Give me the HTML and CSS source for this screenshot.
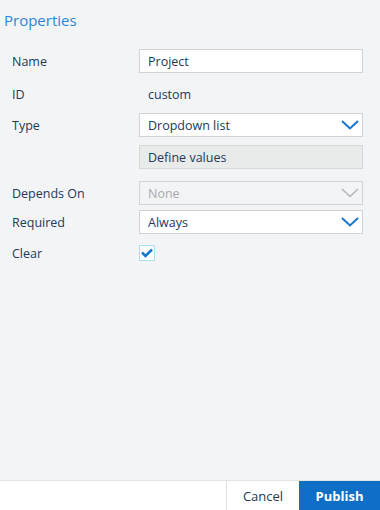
FILE: index.html
```html
<!DOCTYPE html>
<html>
<head>
    <meta charset="UTF-8">
    <meta name="viewport" content="width=device-width, initial-scale=1.0">
    <title>Properties</title>
    <link rel="stylesheet" href="styles.css">
</head>
<body>
    <div id="panel">
        <div class="panel-header">Properties</div>

        <div class="panel-body">
            <!-- Name -->
            <div class="row">
                <div class="label">Name</div>
                <input type="text" class="field text-field" value="Project">
            </div>

            <!-- ID -->
            <div class="row row-id">
                <div class="label">ID</div>
                <div class="value">custom</div>
            </div>

            <!-- Type -->
            <div class="row row-type">
                <div class="label">Type</div>
                <div class="field select">
                    <span>Dropdown list</span>
                    <svg class="chevron" width="18" height="10" viewBox="0 0 18 10"><path d="M1 1 L9 8.5 L17 1" fill="none" stroke="currentColor" stroke-width="2"/></svg>
                </div>
            </div>

            <div class="row row-define">
                <div class="label"></div>
                <button class="field define-button">Define values</button>
            </div>

            <!-- Depends On -->
            <div class="row row-depends">
                <div class="label">Depends On</div>
                <div class="field select disabled">
                    <span>None</span>
                    <svg class="chevron" width="18" height="10" viewBox="0 0 18 10"><path d="M1 1 L9 8.5 L17 1" fill="none" stroke="currentColor" stroke-width="1.6"/></svg>
                </div>
            </div>

            <!-- Required -->
            <div class="row row-required">
                <div class="label">Required</div>
                <div class="field select">
                    <span>Always</span>
                    <svg class="chevron" width="18" height="10" viewBox="0 0 18 10"><path d="M1 1 L9 8.5 L17 1" fill="none" stroke="currentColor" stroke-width="2"/></svg>
                </div>
            </div>

            <!-- Clear -->
            <div class="row row-clear">
                <div class="label">Clear</div>
                <div class="checkbox">
                    <svg width="12" height="10" viewBox="0 0 12 10"><path d="M1 4.5 L4.5 8 L11 1.5" fill="none" stroke="#1776d2" stroke-width="2.6"/></svg>
                </div>
            </div>
        </div>

        <!-- Footer -->
        <div class="panel-footer">
            <button class="cancel-button">Cancel</button>
            <button class="publish-button">Publish</button>
        </div>
    </div>
</body>
</html>
```

FILE: styles.css
```css
/* Styles */
body {
    font-family: "Open Sans", "Noto Sans", sans-serif;
    margin: 0;
    background-color: #f3f4f6;
    color: #22395a;
}

#panel {
    width: 380px;
    height: 510px;
    display: flex;
    flex-direction: column;
}

/* Header */
.panel-header {
    color: #2b88d8;
    font-size: 15px;
    padding: 10px 4px 0;
    height: 41px;
    box-sizing: border-box;
}

/* Form rows */
.panel-body {
    flex: 1;
    padding: 8px 17px 0 12px;
}

.row {
    display: flex;
    align-items: center;
    height: 24px;
    font-size: 12.5px;
}

.row-id { margin-top: 9px; }
.row-type { margin-top: 7px; }
.row-define { margin-top: 8px; }
.row-depends { margin-top: 12px; }
.row-required { margin-top: 5px; }
.row-clear { margin-top: 7px; }

.label {
    width: 127px;
    flex-shrink: 0;
}

.value {
    padding-left: 9px;
}

.field {
    width: 224px;
    height: 24px;
    box-sizing: border-box;
    border: 1px solid #d0d4d8;
    background-color: #ffffff;
    font-family: inherit;
    font-size: 12.5px;
    color: #22395a;
    padding: 0 8px;
}

.text-field {
    outline: none;
}

.select {
    display: flex;
    align-items: center;
    justify-content: space-between;
    padding-right: 3px;
}

.chevron {
    color: #1776d2;
}

.select.disabled {
    background-color: #f3f4f6;
    color: #a8aaad;
}

.select.disabled .chevron {
    color: #b5b7ba;
}

.define-button {
    text-align: left;
    background-color: #e9eaea;
    border-color: #d6d8da;
}

.checkbox {
    width: 16px;
    height: 16px;
    box-sizing: border-box;
    border: 1px solid #a9e3f0;
    background-color: #ffffff;
    display: flex;
    align-items: center;
    justify-content: center;
}

/* Footer */
.panel-footer {
    height: 29px;
    border-top: 1px solid #e1e3e6;
    background-color: #ffffff;
    display: flex;
    justify-content: flex-end;
}

.cancel-button, .publish-button {
    border: none;
    font-family: inherit;
    font-size: 13px;
    cursor: pointer;
}

.cancel-button {
    width: 73px;
    background-color: #ffffff;
    border-left: 1px solid #dfe1e4;
    color: #22395a;
}

.publish-button {
    width: 81px;
    background-color: #0f6fc6;
    color: #ffffff;
    font-weight: bold;
}
```
